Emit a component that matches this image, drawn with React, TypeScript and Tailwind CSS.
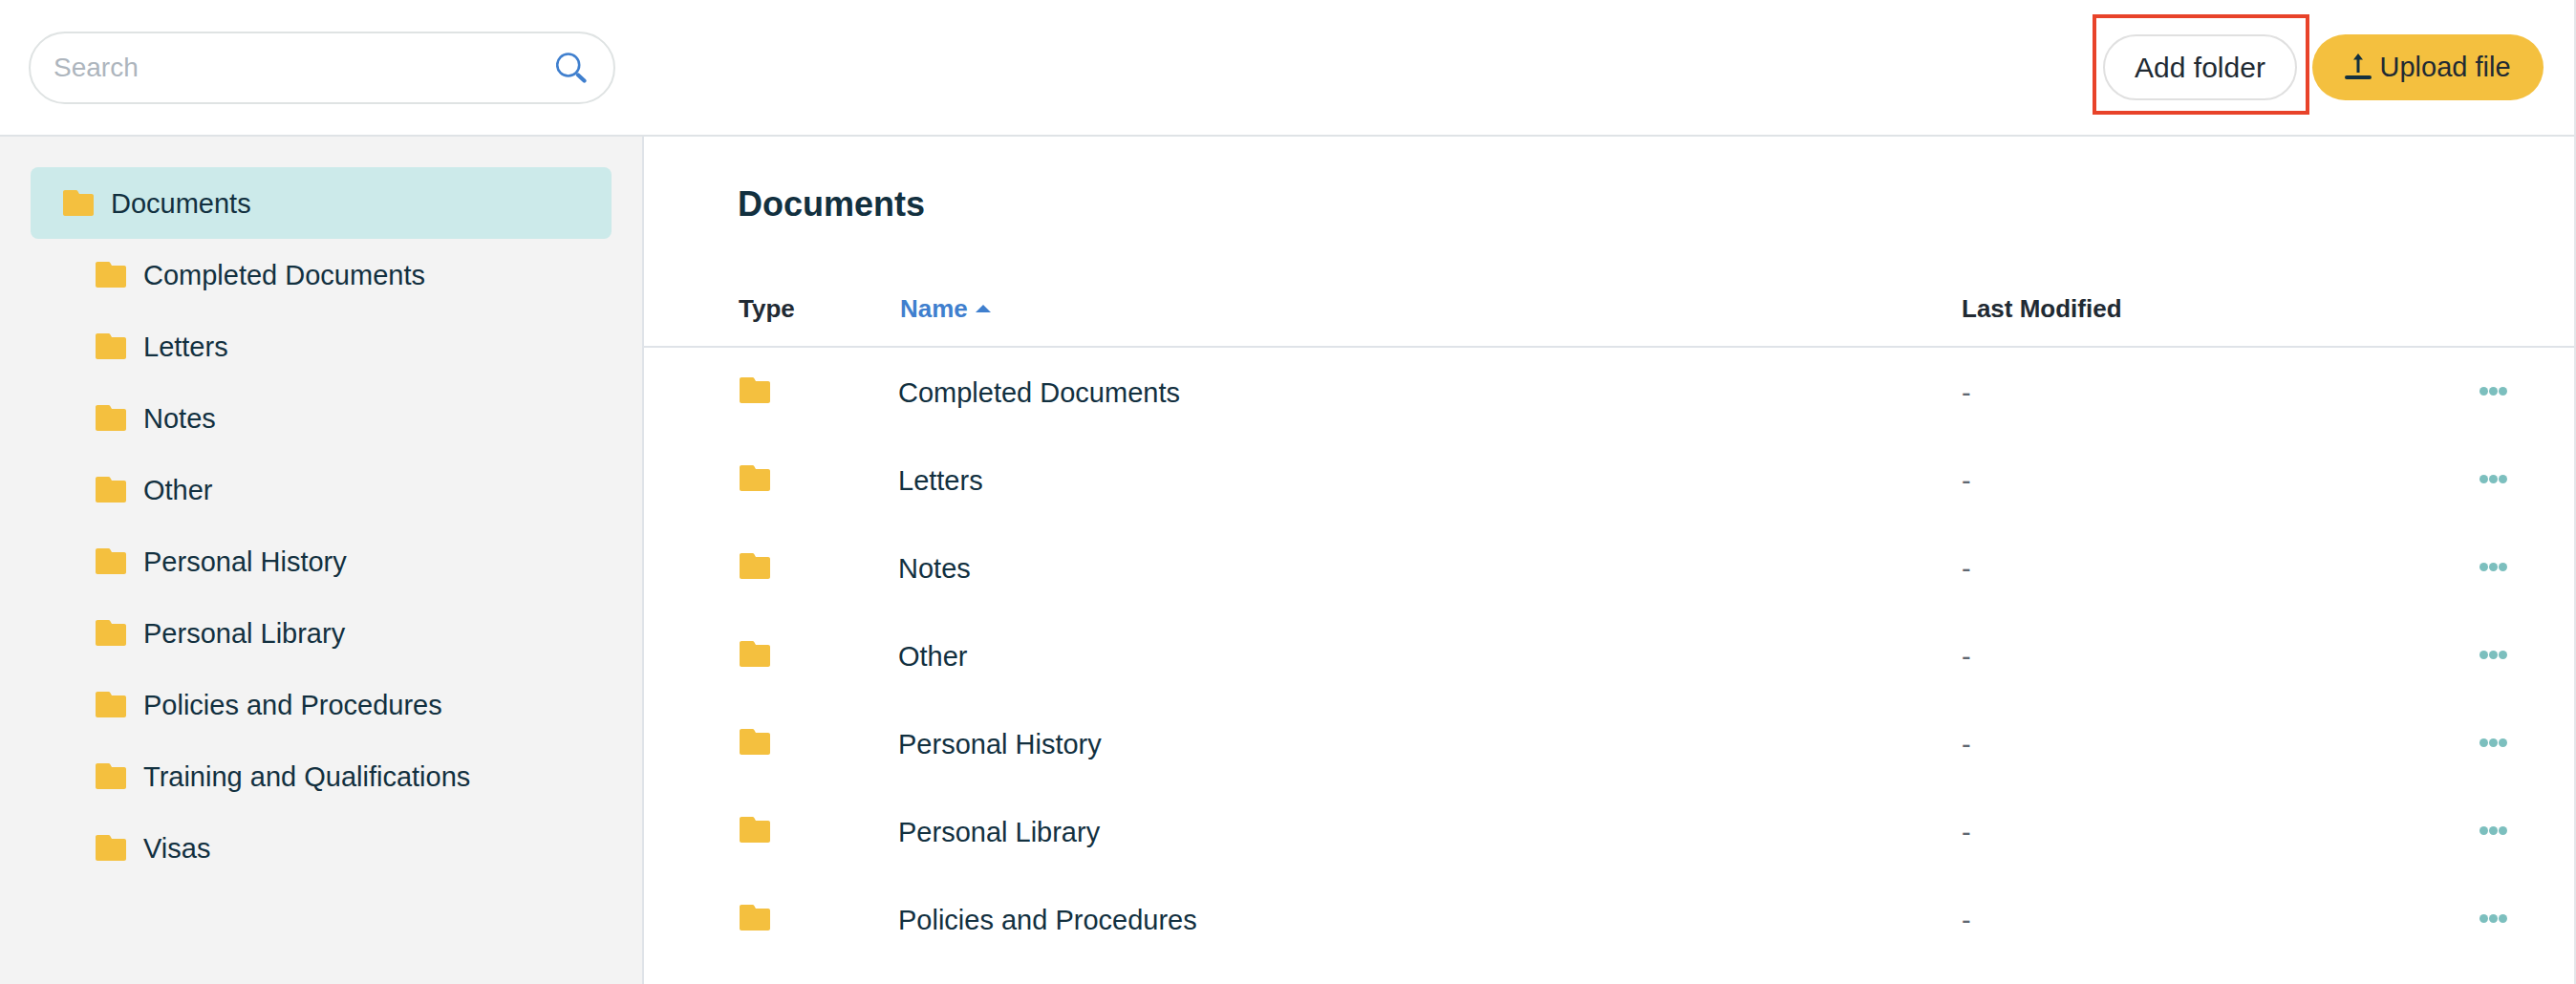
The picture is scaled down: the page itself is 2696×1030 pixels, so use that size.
const sideFolders = [
  'Completed Documents',
  'Letters',
  'Notes',
  'Other',
  'Personal History',
  'Personal Library',
  'Policies and Procedures',
  'Training and Qualifications',
  'Visas',
];

const rows = sideFolders.slice(0, 7);

function FolderIcon() {
  return (
    <svg viewBox="0 0 32 27" className="w-8 h-[27px] shrink-0" fill="#f4c03f">
      <path d="M2 0h11.5c.8 0 1.4.4 1.8 1l1.7 3h13c1.100 0 2 .9 2 2v19c0 1.100-.9 2-2 2H2c-1.100 0-2-.9-2-2V2C0 .9.900 0 2 0z" />
    </svg>
  );
}

function SearchIcon() {
  return (
    <svg viewBox="0 0 33 33" className="w-[33px] h-[33px]" fill="none" stroke="#3f7fce">
      <circle cx="12.700" cy="14" r="11.500" strokeWidth="2.600" />
      <path d="M23 24.500l6.500 6" strokeWidth="4.200" strokeLinecap="round" />
    </svg>
  );
}

function UploadIcon() {
  return (
    <svg viewBox="0 0 28 28" className="w-7 h-7 -mt-[3px]" fill="#12303f">
      <path d="M14 1l5 6.500h-3.500V21h-3V7.500H9z" />
      <rect x="0" y="24" width="28" height="4" rx="2" />
    </svg>
  );
}

function Dots() {
  return (
    <div className="flex gap-[1px]">
      <span className="w-[9px] h-[9px] rounded-full bg-[#7cbfbe]" />
      <span className="w-[9px] h-[9px] rounded-full bg-[#7cbfbe]" />
      <span className="w-[9px] h-[9px] rounded-full bg-[#7cbfbe]" />
    </div>
  );
}

export default function App() {
  return (
    <div className="h-[1030px] overflow-hidden bg-white flex flex-col border-r-2 border-[#e4e6e9] font-['Liberation_Sans',Arial,sans-serif] text-[29px] text-[#12303f]">
      {/* Top bar */}
      <header className="relative h-[143px] shrink-0 flex items-center justify-between pl-[30px] pr-[32px] border-b-2 border-[#dfe3e6]">
        <div className="w-[614px] h-[76px] rounded-full border-2 border-[#dfe3e3] flex items-center justify-between pl-6 pr-[27px]">
          <span className="text-[28px] text-[#adb5bd]">Search</span>
          <SearchIcon />
        </div>
        <div className="flex items-center gap-4">
          <button className="w-[203px] h-[69px] rounded-full border-2 border-[#e0e0e0] bg-white text-[30px] text-[#212a33]">
            Add folder
          </button>
          <button className="w-[242px] h-[69px] rounded-full bg-[#f4c03f] text-[#212a33] flex items-center justify-center gap-2">
            <UploadIcon />
            Upload file
          </button>
        </div>
        {/* annotation round the add folder button */}
        <div className="absolute left-[2190px] top-[15px] w-[227px] h-[105px] border-4 border-[#e8432a]" />
      </header>

      <div className="flex-1 flex min-h-0">
        {/* Folder tree */}
        <aside className="w-[674px] shrink-0 bg-[#f3f3f3] border-r-2 border-[#dfe3e8] pt-8 pl-8 pr-8">
          <div className="w-[608px] h-[75px] rounded-lg bg-[#cceaea] flex items-center gap-[18px] pl-[34px]">
            <FolderIcon />
            <span className="pt-[3px]">Documents</span>
          </div>
          {sideFolders.map((name) => (
            <div key={name} className="h-[75px] flex items-center gap-[18px] pl-[68px]">
              <FolderIcon />
              <span className="pt-[3px]">{name}</span>
            </div>
          ))}
        </aside>

        {/* Folder contents */}
        <main className="flex-1 min-w-0">
          <h1 className="pl-[98px] pt-[49px] text-[36px] leading-[44px] font-bold">Documents</h1>
          <div className="mt-[48px] h-[80px] flex items-center border-b-2 border-[#dfe3e8] pl-[99px] text-[26px] font-bold text-[#212a33]">
            <span className="w-[169px]">Type</span>
            <span className="w-[1111px] flex items-center gap-2 text-[#3f7fce]">
              Name
              <span className="w-0 h-0 border-x-[8px] border-x-transparent border-b-[8px] border-b-[#3f7fce]" />
            </span>
            <span>Last Modified</span>
          </div>
          {rows.map((name) => (
            <div key={name} className="h-[92px] flex items-center pl-[100px] pr-[70px]">
              <div className="w-[166px] -mt-[3px]">
                <FolderIcon />
              </div>
              <span className="w-[1113px] pt-1">{name}</span>
              <span className="flex-1 pt-1 text-[#5f6771]">-</span>
              <div className="-mt-[2px]">
                <Dots />
              </div>
            </div>
          ))}
        </main>
      </div>
    </div>
  );
}
